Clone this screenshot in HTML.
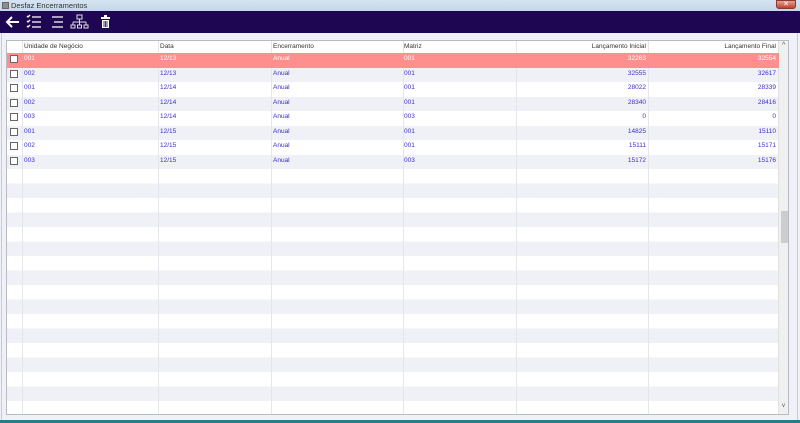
<!DOCTYPE html>
<html><head><meta charset="utf-8">
<style>
*{margin:0;padding:0;box-sizing:border-box}
body{width:800px;height:423px;overflow:hidden;background:#f0f1f6;font-family:"Liberation Sans",sans-serif;position:relative}
.title{position:absolute;left:0;top:0;width:800px;height:11px;background:linear-gradient(#d6e4f2,#c4d6ea);font-size:7.5px;color:#333;line-height:11px;padding-left:11px}
.title .ic{position:absolute;left:2px;top:2px;width:7px;height:7px;background:#8a8f88;border:1px solid #666}
.close{position:absolute;left:776px;top:0;width:20px;height:9px;background:linear-gradient(#e8a090,#c04030);border:1px solid #8a3a30;border-radius:0 0 3px 3px;color:#fff;font-size:7px;text-align:center;line-height:8px}
.tb{position:absolute;left:0;top:11px;width:800px;height:22px;background:#1e0652}
.outer{position:absolute;left:1px;top:33px;width:797px;height:388px;border-left:1px solid #c8cbd6;border-right:1px solid #c8cbd6}
.bottom{position:absolute;left:0;top:420px;width:800px;height:3px;background:#2b7a8a}
.grid{position:absolute;left:6px;top:40px;width:783px;height:375px;border:1px solid #b8bac4;background:#fff;overflow:hidden}
.hdr{position:absolute;left:0;top:0;width:772px;height:12px;background:#fff;font-size:6.5px;color:#333}
.row{position:absolute;left:0;width:772px;height:14.5px;font-size:6.5px;color:#3b2fc9}
.c{position:absolute;top:0;height:100%;line-height:12px;white-space:nowrap}
.r{text-align:right}
.vl{position:absolute;top:0;width:1px;height:100%;background:#e4e6ec}
.cb{position:absolute;left:3px;top:2px;width:8px;height:8px;border:1px solid #666;background:#fff}
.sb{position:absolute;left:771px;top:0;width:11px;height:373px;background:#f0f0f0;border-left:1px solid #e0e0e0}
.thumb{position:absolute;left:2px;top:170px;width:7px;height:32px;background:#cdcdcd}
</style></head><body>
<div class="title"><div class="ic"></div>Desfaz Encerramentos</div>
<div class="close">✕</div>
<div class="tb">
<svg width="120" height="22" viewBox="0 0 120 22">
<g fill="none" stroke="#fff" stroke-width="2">
<path d="M7 11H19M12 6L7 11L12 16"/>
</g>
<g stroke="#fff" stroke-width="1.3" fill="none">
<path d="M27 5l1 1 2-2M27 10l1 1 2-2M27 15l1 1 2-2"/>
<path d="M32 6H41M32 11H41M32 16H41"/>
<path d="M52 6H63M54 11H63M52 16H63"/>
</g>
<g stroke="#ddd" stroke-width="1" fill="none">
<rect x="77" y="4" width="5" height="4"/>
<path d="M79.5 8V11M73 11H86M73 11V14M79.5 11V14M86 11V14"/>
<rect x="71" y="14" width="4" height="3"/><rect x="77.5" y="14" width="4" height="3"/><rect x="84" y="14" width="4" height="3"/>
</g>
<g fill="#fff"><rect x="101" y="6" width="9" height="2"/><rect x="104" y="4" width="3" height="2"/><rect x="102" y="9" width="7" height="8"/></g>
<g stroke="#1e0652" stroke-width="0.8"><path d="M104 10V16M105.5 10V16M107 10V16"/></g>
</svg>
</div>
<div class="outer"></div>
<div class="grid">
<div class="hdr">
<div class="c" style="left:17px">Unidade de Negócio</div>
<div class="c" style="left:153px">Data</div>
<div class="c" style="left:266px">Encerramento</div>
<div class="c" style="left:397px">Matriz</div>
<div class="c r" style="left:510px;width:129px">Lançamento Inicial</div>
<div class="c r" style="left:642px;width:127px">Lançamento Final</div>
</div>
<div style="position:absolute;left:0;top:12px;width:772px;height:1px;background:#d8dae2"></div>
<div class="row" style="top:12px;background:#ff8f8f;color:#fff;z-index:3"><div class="cb"></div><div class="c" style="left:17px">001</div><div class="c" style="left:153px">12/13</div><div class="c" style="left:266px">Anual</div><div class="c" style="left:397px">001</div><div class="c r" style="left:510px;width:129px">32263</div><div class="c r" style="left:642px;width:127px">32554</div></div>
<div class="row" style="top:26.5px;background:#f0f1f7"><div class="cb"></div><div class="c" style="left:17px">002</div><div class="c" style="left:153px">12/13</div><div class="c" style="left:266px">Anual</div><div class="c" style="left:397px">001</div><div class="c r" style="left:510px;width:129px">32555</div><div class="c r" style="left:642px;width:127px">32617</div></div>
<div class="row" style="top:41px;background:#fff"><div class="cb"></div><div class="c" style="left:17px">001</div><div class="c" style="left:153px">12/14</div><div class="c" style="left:266px">Anual</div><div class="c" style="left:397px">001</div><div class="c r" style="left:510px;width:129px">28022</div><div class="c r" style="left:642px;width:127px">28339</div></div>
<div class="row" style="top:55.5px;background:#f0f1f7"><div class="cb"></div><div class="c" style="left:17px">002</div><div class="c" style="left:153px">12/14</div><div class="c" style="left:266px">Anual</div><div class="c" style="left:397px">001</div><div class="c r" style="left:510px;width:129px">28340</div><div class="c r" style="left:642px;width:127px">28416</div></div>
<div class="row" style="top:70px;background:#fff"><div class="cb"></div><div class="c" style="left:17px">003</div><div class="c" style="left:153px">12/14</div><div class="c" style="left:266px">Anual</div><div class="c" style="left:397px">003</div><div class="c r" style="left:510px;width:129px">0</div><div class="c r" style="left:642px;width:127px">0</div></div>
<div class="row" style="top:84.5px;background:#f0f1f7"><div class="cb"></div><div class="c" style="left:17px">001</div><div class="c" style="left:153px">12/15</div><div class="c" style="left:266px">Anual</div><div class="c" style="left:397px">001</div><div class="c r" style="left:510px;width:129px">14825</div><div class="c r" style="left:642px;width:127px">15110</div></div>
<div class="row" style="top:99px;background:#fff"><div class="cb"></div><div class="c" style="left:17px">002</div><div class="c" style="left:153px">12/15</div><div class="c" style="left:266px">Anual</div><div class="c" style="left:397px">001</div><div class="c r" style="left:510px;width:129px">15111</div><div class="c r" style="left:642px;width:127px">15171</div></div>
<div class="row" style="top:113.5px;background:#f0f1f7"><div class="cb"></div><div class="c" style="left:17px">003</div><div class="c" style="left:153px">12/15</div><div class="c" style="left:266px">Anual</div><div class="c" style="left:397px">003</div><div class="c r" style="left:510px;width:129px">15172</div><div class="c r" style="left:642px;width:127px">15176</div></div>
<div style="position:absolute;left:0;top:128px;width:772px;height:250px;background:repeating-linear-gradient(#fff 0,#fff 14.5px,#f0f1f7 14.5px,#f0f1f7 29px)"></div>
<div class="vl" style="left:15px;top:0"></div>
<div class="vl" style="left:151px"></div>
<div class="vl" style="left:264px"></div>
<div class="vl" style="left:396px"></div>
<div class="vl" style="left:509px"></div>
<div class="vl" style="left:641px"></div>
<div class="sb"><div style="position:absolute;top:1px;left:3px;font-size:7px;color:#555">^</div><div class="thumb"></div><div style="position:absolute;top:362px;left:3px;font-size:6px;color:#555">v</div></div>
</div>
<div class="bottom"></div>
</body></html>
